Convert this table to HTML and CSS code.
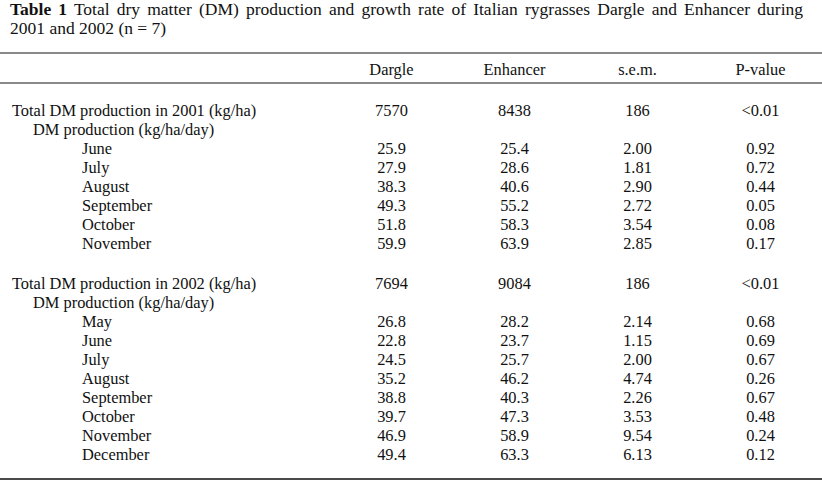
FILE: index.html
```html
<!DOCTYPE html>
<html lang="en">
<head>
<meta charset="utf-8">
<title>Table 1</title>
<link rel="stylesheet" href="styles.css">
</head>
<body>
<div class="page">
  <div class="caption">
    <span class="line first"><b>Table 1</b> Total dry matter (DM) production and growth rate of Italian rygrasses Dargle and Enhancer during</span>
    <span class="line second">2001 and 2002 (n = 7)</span>
  </div>
  <table class="data">
    <colgroup>
      <col class="c-label">
      <col class="c-num">
      <col class="c-num">
      <col class="c-num">
      <col class="c-num">
    </colgroup>
    <thead>
      <tr>
        <th></th>
        <th>Dargle</th>
        <th>Enhancer</th>
        <th>s.e.m.</th>
        <th>P-value</th>
      </tr>
    </thead>
    <tbody>
      <tr class="sp-top"><td colspan="5"></td></tr>
      <tr><td class="l0">Total DM production in 2001 (kg/ha)</td><td>7570</td><td>8438</td><td>186</td><td>&lt;0.01</td></tr>
      <tr><td class="l1">DM production (kg/ha/day)</td><td></td><td></td><td></td><td></td></tr>
      <tr><td class="l2">June</td><td>25.9</td><td>25.4</td><td>2.00</td><td>0.92</td></tr>
      <tr><td class="l2">July</td><td>27.9</td><td>28.6</td><td>1.81</td><td>0.72</td></tr>
      <tr><td class="l2">August</td><td>38.3</td><td>40.6</td><td>2.90</td><td>0.44</td></tr>
      <tr><td class="l2">September</td><td>49.3</td><td>55.2</td><td>2.72</td><td>0.05</td></tr>
      <tr><td class="l2">October</td><td>51.8</td><td>58.3</td><td>3.54</td><td>0.08</td></tr>
      <tr><td class="l2">November</td><td>59.9</td><td>63.9</td><td>2.85</td><td>0.17</td></tr>
      <tr class="sp-mid"><td colspan="5"></td></tr>
      <tr><td class="l0">Total DM production in 2002 (kg/ha)</td><td>7694</td><td>9084</td><td>186</td><td>&lt;0.01</td></tr>
      <tr><td class="l1">DM production (kg/ha/day)</td><td></td><td></td><td></td><td></td></tr>
      <tr><td class="l2">May</td><td>26.8</td><td>28.2</td><td>2.14</td><td>0.68</td></tr>
      <tr><td class="l2">June</td><td>22.8</td><td>23.7</td><td>1.15</td><td>0.69</td></tr>
      <tr><td class="l2">July</td><td>24.5</td><td>25.7</td><td>2.00</td><td>0.67</td></tr>
      <tr><td class="l2">August</td><td>35.2</td><td>46.2</td><td>4.74</td><td>0.26</td></tr>
      <tr><td class="l2">September</td><td>38.8</td><td>40.3</td><td>2.26</td><td>0.67</td></tr>
      <tr><td class="l2">October</td><td>39.7</td><td>47.3</td><td>3.53</td><td>0.48</td></tr>
      <tr><td class="l2">November</td><td>46.9</td><td>58.9</td><td>9.54</td><td>0.24</td></tr>
      <tr><td class="l2">December</td><td>49.4</td><td>63.3</td><td>6.13</td><td>0.12</td></tr>
      <tr class="sp-bot"><td colspan="5"></td></tr>
    </tbody>
  </table>
</div>
</body>
</html>
```
FILE: styles.css
```css
html, body {
  margin: 0;
  padding: 0;
  background: #ffffff;
}

body {
  font-family: "Liberation Serif", "Times New Roman", serif;
  color: #111111;
  width: 822px;
  height: 480px;
  overflow: hidden;
}

.page {
  width: 822px;
}

.caption {
  font-size: 17.5px;
  padding: 0 19px 0 10px;
  margin-bottom: 14.6px;
}

.caption .line {
  display: block;
  white-space: nowrap;
}

.caption .first {
  line-height: 19.4px;
  text-align: justify;
  text-align-last: justify;
  white-space: normal;
}

.caption .second {
  line-height: 18px;
}

.data {
  width: 822px;
  border-collapse: collapse;
  table-layout: fixed;
  font-size: 16.4px;
  border-bottom: 2px solid #4a4a4a;
}

.c-label {
  width: 330px;
}

.c-num {
  width: 123px;
}

.data thead th {
  font-weight: normal;
  height: 25px;
  padding: 3px 0 0 0;
  text-align: center;
  border-top: 2px solid #8a8a8a;
  border-bottom: 2px solid #8a8a8a;
  line-height: 19px;
}

.data td {
  padding: 0;
  height: 19px;
  line-height: 19px;
  text-align: center;
  white-space: nowrap;
}

.data td.l0,
.data td.l1,
.data td.l2 {
  text-align: left;
}

.data td.l0 {
  padding-left: 12px;
}

.data td.l1 {
  padding-left: 33px;
}

.data td.l2 {
  padding-left: 82px;
}

.data tr.sp-top td {
  height: 17px;
}

.data tr.sp-mid td {
  height: 21px;
}

.data tr.sp-bot td {
  height: 14px;
}
```
